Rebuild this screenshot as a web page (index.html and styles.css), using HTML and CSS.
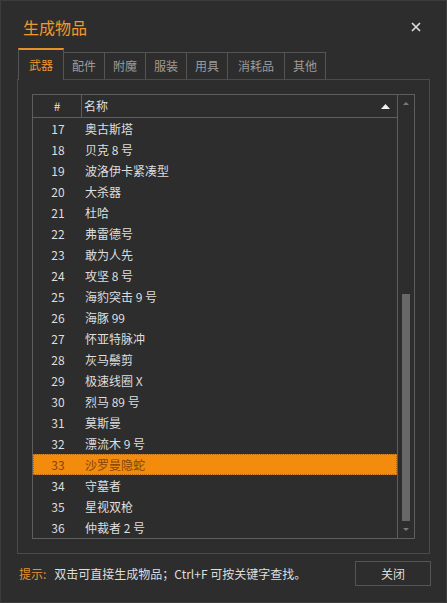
FILE: index.html
```html
<!DOCTYPE html>
<html lang="zh-CN">
<head>
    <meta charset="UTF-8">
    <meta name="viewport" content="width=device-width, initial-scale=1.0">
    <title>生成物品</title>
    <link rel="stylesheet" href="styles.css">
</head>
<body>
    <div class="window">
        <div class="titlebar">
            <span class="title">生成物品</span>
            <span class="close-x">
                <svg width="10" height="10" viewBox="0 0 10 10"><path d="M1 1L9 9M9 1L1 9" stroke="#dcdcdc" stroke-width="1.7" fill="none"/></svg>
            </span>
        </div>

        <div class="tabs">
            <div class="tab active">武器</div>
            <div class="tab">配件</div>
            <div class="tab">附魔</div>
            <div class="tab">服装</div>
            <div class="tab">用具</div>
            <div class="tab wide">消耗品</div>
            <div class="tab">其他</div>
        </div>

        <div class="panel">
            <div class="list">
                <div class="grid">
                    <div class="head">
                        <div class="col-num">#</div>
                        <div class="col-name">
                            <span>名称</span>
                            <svg class="sort" width="9" height="5" viewBox="0 0 9 5"><path d="M4.5 0L9 5H0Z" fill="#f2f2f2"/></svg>
                        </div>
                    </div>
                    <div class="rows">
                        <div class="row"><div class="col-num">17</div><div class="col-name">奥古斯塔</div></div>
                        <div class="row"><div class="col-num">18</div><div class="col-name">贝克 8 号</div></div>
                        <div class="row"><div class="col-num">19</div><div class="col-name">波洛伊卡紧凑型</div></div>
                        <div class="row"><div class="col-num">20</div><div class="col-name">大杀器</div></div>
                        <div class="row"><div class="col-num">21</div><div class="col-name">杜哈</div></div>
                        <div class="row"><div class="col-num">22</div><div class="col-name">弗雷德号</div></div>
                        <div class="row"><div class="col-num">23</div><div class="col-name">敢为人先</div></div>
                        <div class="row"><div class="col-num">24</div><div class="col-name">攻坚 8 号</div></div>
                        <div class="row"><div class="col-num">25</div><div class="col-name">海豹突击 9 号</div></div>
                        <div class="row"><div class="col-num">26</div><div class="col-name">海豚 99</div></div>
                        <div class="row"><div class="col-num">27</div><div class="col-name">怀亚特脉冲</div></div>
                        <div class="row"><div class="col-num">28</div><div class="col-name">灰马鬃剪</div></div>
                        <div class="row"><div class="col-num">29</div><div class="col-name">极速线圈 X</div></div>
                        <div class="row"><div class="col-num">30</div><div class="col-name">烈马 89 号</div></div>
                        <div class="row"><div class="col-num">31</div><div class="col-name">莫斯曼</div></div>
                        <div class="row"><div class="col-num">32</div><div class="col-name">漂流木 9 号</div></div>
                        <div class="row selected"><div class="col-num">33</div><div class="col-name">沙罗曼隐蛇</div></div>
                        <div class="row"><div class="col-num">34</div><div class="col-name">守墓者</div></div>
                        <div class="row"><div class="col-num">35</div><div class="col-name">星视双枪</div></div>
                        <div class="row"><div class="col-num">36</div><div class="col-name">仲裁者 2 号</div></div>
                    </div>
                </div>
                <div class="scrollbar">
                    <div class="arrow">
                        <svg width="6" height="3" viewBox="0 0 6 3"><path d="M3 0L6 3H0Z" fill="#7a7a7a"/></svg>
                    </div>
                    <div class="track">
                        <div class="thumb"></div>
                    </div>
                    <div class="arrow">
                        <svg width="6" height="3" viewBox="0 0 6 3"><path d="M0 0H6L3 3Z" fill="#7a7a7a"/></svg>
                    </div>
                </div>
            </div>
        </div>

        <div class="footer">
            <div class="hint"><span class="hint-label">提示:</span>双击可直接生成物品；Ctrl+F 可按关键字查找。</div>
            <button class="button">关闭</button>
        </div>
    </div>
</body>
</html>
```

FILE: styles.css
```css
* {
    box-sizing: border-box;
}
body {
    margin: 0;
    background: #2d2d2d;
    font-family: "Noto Sans CJK SC", "Noto Sans", sans-serif;
    font-size: 12px;
    color: #dedede;
}
.window {
    width: 447px;
    height: 603px;
    border: 1px solid #3c3c3c;
    background: #2d2d2d;
}
.titlebar {
    height: 47px;
    padding: 14px 0 0 22px;
    display: flex;
    justify-content: space-between;
}
.title {
    font-size: 16px;
    line-height: 24px;
    color: #f0982c;
}
.close-x {
    width: 10px;
    height: 10px;
    margin: 7px 25px 0 0;
    display: flex;
}
.tabs {
    height: 31px;
    margin-left: 17px;
    display: flex;
    align-items: flex-end;
    position: relative;
    z-index: 1;
}
.tab {
    height: 27px;
    padding: 0 8px;
    line-height: 26px;
    border: 1px solid #555555;
    border-bottom: none;
    margin-left: -1px;
    color: #9c9c9c;
    background: #2d2d2d;
}
.tab:first-child {
    margin-left: 0;
}
.tab.wide {
    padding: 0 10px;
}
.tab.active {
    height: 32px;
    padding: 0 10px 1px;
    margin-bottom: -1px;
    line-height: 30px;
    border-top: 2px solid #e8912a;
    color: #f0982c;
}
.panel {
    width: 413px;
    height: 475px;
    margin-left: 16px;
    padding: 14px;
    border: 1px solid #4b4b4b;
}
.list {
    height: 445px;
    display: flex;
    border: 1px solid #5e5e5e;
}
.grid {
    width: 365px;
    border-right: 1px solid #5e5e5e;
}
.head {
    height: 23px;
    display: flex;
    border-bottom: 1px solid #5e5e5e;
    line-height: 22px;
}
.head .col-num {
    border-right: 1px solid #5e5e5e;
}
.head .col-name {
    display: flex;
    justify-content: space-between;
    align-items: center;
    padding-right: 7px;
}
.col-num {
    width: 49px;
    text-align: center;
}
.col-name {
    flex: 1;
    padding-left: 2px;
}
.row {
    height: 21px;
    line-height: 21px;
    display: flex;
}
.row .col-num {
    width: 50px;
}
.row .col-name {
    padding-left: 2px;
}
.row.selected {
    background: #f38b0c;
    color: #82460a;
    outline: 1px dotted #b5660a;
    outline-offset: -1px;
}
.scrollbar {
    width: 16px;
    display: flex;
    flex-direction: column;
}
.arrow {
    height: 17px;
    display: flex;
    align-items: center;
    justify-content: center;
}
.track {
    flex: 1;
    padding: 0 4px;
}
.thumb {
    height: 227px;
    margin-top: 182px;
    background: #686868;
}
.footer {
    display: flex;
    justify-content: space-between;
    align-items: center;
    margin-top: 7px;
    padding: 0 15px 0 18px;
}
.hint {
    line-height: 25px;
}
.hint-label {
    color: #e8912a;
    margin-right: 8px;
}
.button {
    width: 76px;
    height: 25px;
    border: 1px solid #555555;
    background: transparent;
    color: #dedede;
    font-family: inherit;
    font-size: 12px;
    padding: 0;
}
```
